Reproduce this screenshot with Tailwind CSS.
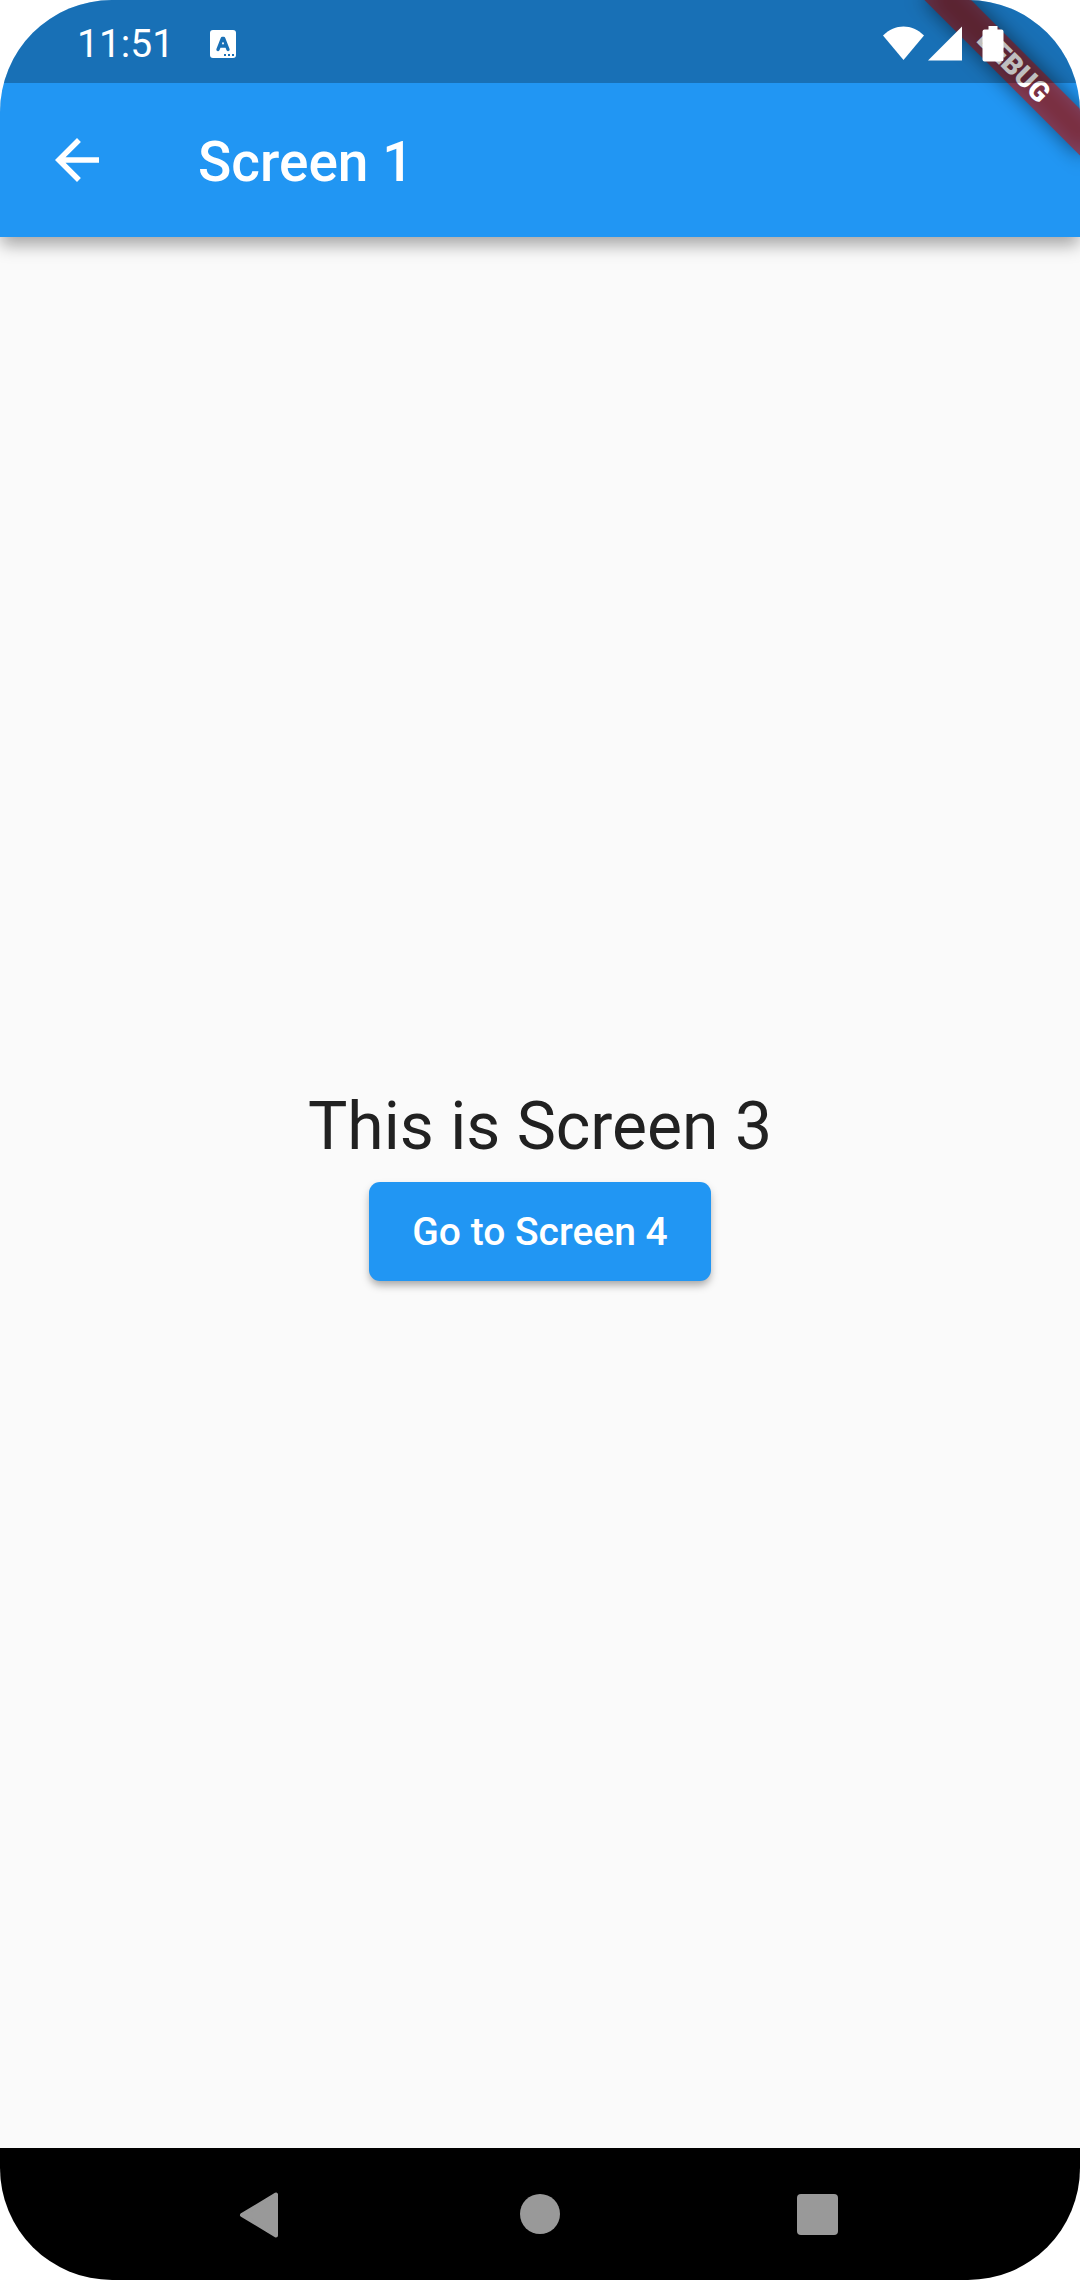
<!DOCTYPE html>
<html lang="en">
<head>
<meta charset="utf-8">
<meta name="viewport" content="width=device-width, initial-scale=1">
<title>Screen 1</title>
<script src="https://cdn.jsdelivr.net/npm/@tailwindcss/browser@4"></script>
</head>
<body class="bg-white font-['Roboto',sans-serif]">
<div class="relative flex min-h-screen flex-col overflow-hidden rounded-[112px] bg-[#fafafa]">

  <header class="relative bg-[#2196f3] text-white shadow-[0_9px_16px_-1px_rgb(0_0_0/0.34)]">
    <!-- Status bar: its scrim and icons lie over the debug ribbon -->
    <div class="relative z-20 flex h-[83px] items-center bg-black/25 pt-1 pr-[76px] pl-[77px]">
      <time class="text-[39px] leading-[48px]">11:51</time>
      <svg class="ml-9 h-7 w-[26px]" viewBox="0 0 26 28" aria-hidden="true">
        <rect width="26" height="28" rx="3" fill="#fff"/>
        <path d="M8 19.500 12.300 8.500H13.700L18 19.500M10 16H16" fill="none" stroke="#1970b6" stroke-width="3.400" stroke-linejoin="round" stroke-linecap="round"/>
        <path d="M14 25h2M18 25h2M22 25h2" stroke="#1970b6" stroke-width="2"/>
      </svg>
      <svg class="ml-auto h-9 w-[122px]" viewBox="0 0 122 36" fill="#fff" aria-hidden="true">
        <path d="M1 9.500C13-2.500 30-2.500 42 9.500L21.500 34Z"/>
        <path d="M46 34.500H80V.500Z"/>
        <path d="M106.500 0h9v3.500h4a2 2 0 0 1 2 2V33.500a2 2 0 0 1-2 2h-17a2 2 0 0 1-2-2V5.500a2 2 0 0 1 2-2h4Z"/>
      </svg>
    </div>
    <!-- App bar -->
    <div class="flex h-[154px] items-center pl-11">
      <button type="button" aria-label="Back" class="h-[66px] w-[66px]">
        <svg class="h-full w-full" viewBox="0 0 24 24" fill="#fff" aria-hidden="true"><path d="M20 11H7.830l5.590-5.590L12 4l-8 8 8 8 1.410-1.410L7.830 13H20v-2z"/></svg>
      </button>
      <h1 class="ml-[88px] pt-1 text-[55px] leading-[64px] font-medium">Screen 1</h1>
    </div>
  </header>

  <!-- Debug ribbon across the top right corner -->
  <div class="absolute top-0 right-0 z-10 h-0 w-0 rotate-45">
    <div class="absolute top-[77px] -left-[110px] h-[33px] w-[220px] bg-black/50 blur-[10px]"></div>
    <div class="absolute top-[77px] -left-[110px] h-[33px] w-[220px] bg-[#b71c1c]/63 text-center text-[28px] leading-[33px] font-black text-white">DEBUG</div>
  </div>

  <main class="flex flex-1 flex-col items-center justify-center">
    <p class="text-[66px] leading-[77px] text-[#212121]">This is Screen 3</p>
    <button type="button" class="my-[17px] h-[99px] rounded-[11px] bg-[#2196f3] px-[43px] pt-0.5 text-[39px] font-medium text-white shadow-[0_5px_8px_-1px_rgb(0_0_0/0.35)]">Go to Screen 4</button>
  </main>

  <!-- System navigation -->
  <nav class="flex h-[132px] items-center justify-center gap-[212px] bg-black" aria-label="System">
    <button type="button" aria-label="Back" class="h-[66px] w-[66px]">
      <svg class="h-full w-full" viewBox="0 0 66 66" aria-hidden="true"><path d="M13 34 47 13.500V54.500Z" fill="#999" stroke="#999" stroke-width="4" stroke-linejoin="round"/></svg>
    </button>
    <button type="button" aria-label="Home" class="h-[66px] w-[66px]">
      <svg class="h-full w-full" viewBox="0 0 66 66" aria-hidden="true"><circle cx="33" cy="33" r="20" fill="#999"/></svg>
    </button>
    <button type="button" aria-label="Overview" class="h-[66px] w-[66px]">
      <svg class="h-full w-full" viewBox="0 0 66 66" aria-hidden="true"><rect x="12" y="13" width="41" height="41" rx="4" fill="#999"/></svg>
    </button>
  </nav>
</div>
</body>
</html>
